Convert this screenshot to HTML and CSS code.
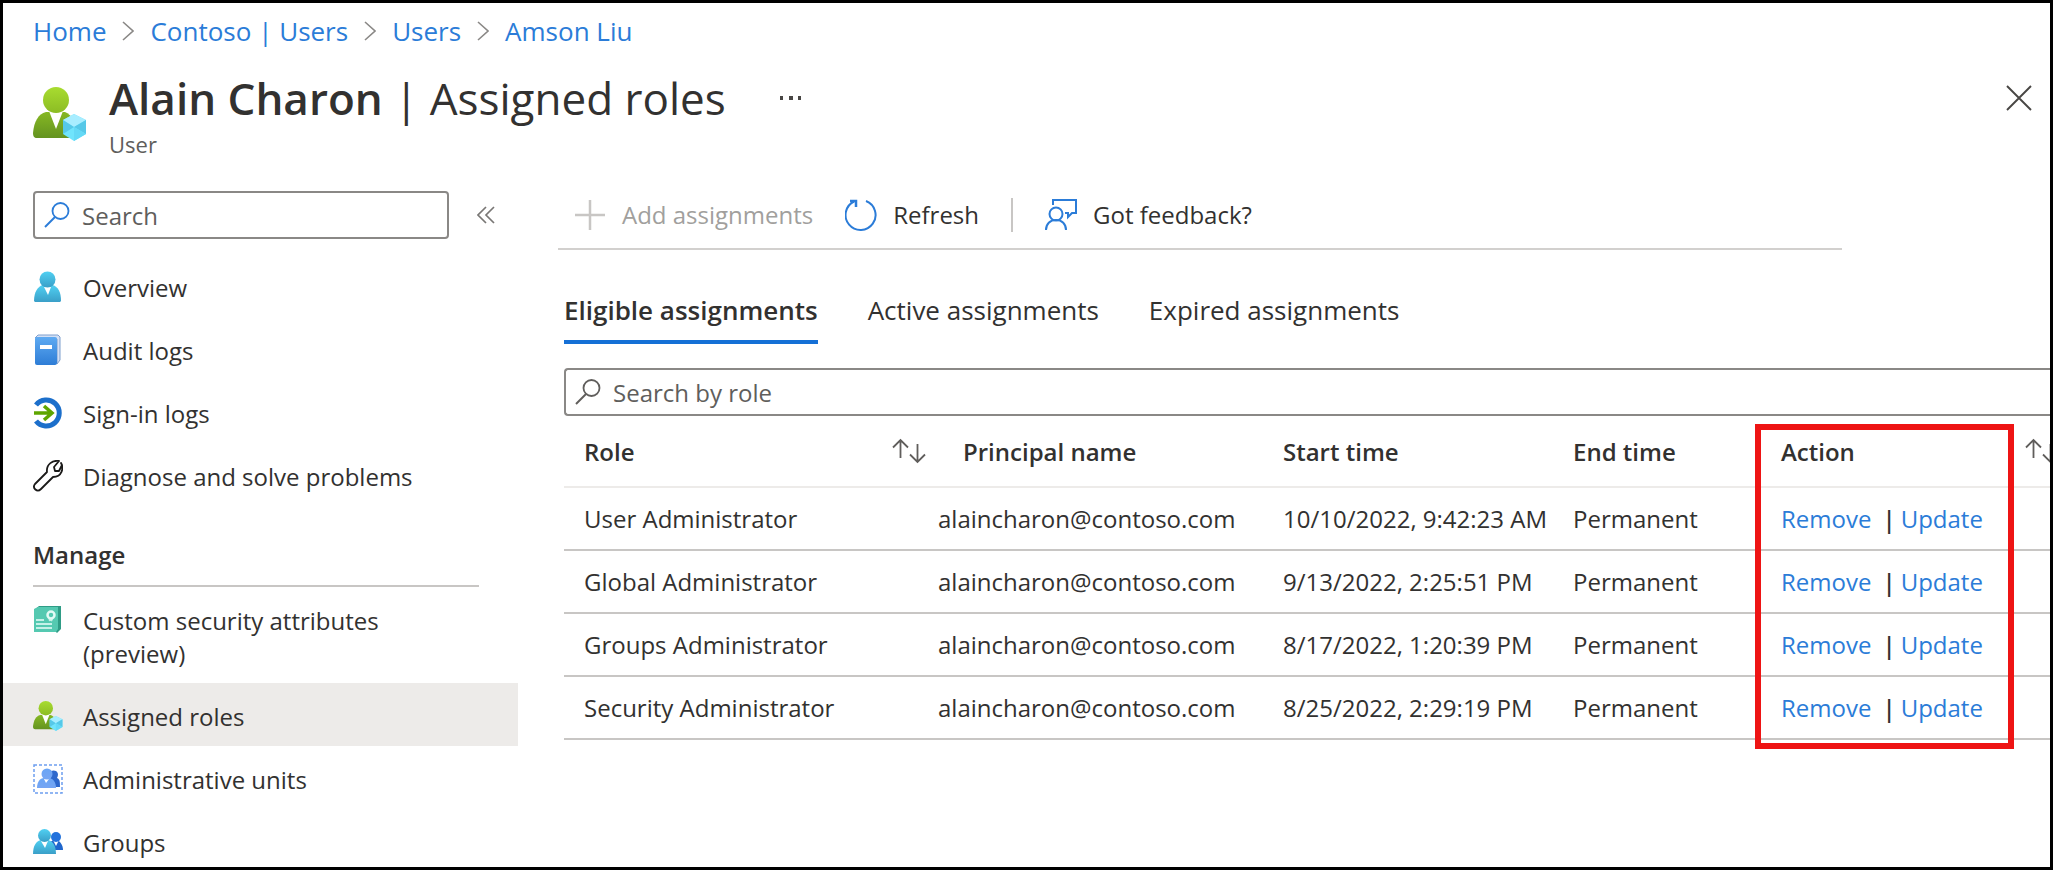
FILE: index.html
```html
<!DOCTYPE html>
<html lang="en">
<head>
<meta charset="utf-8">
<meta name="viewport" content="width=device-width, initial-scale=1">
<title>Alain Charon | Assigned roles</title>
<link rel="stylesheet" href="styles.css">
</head>
<body>
<svg class="defs" width="0" height="0" aria-hidden="true">
  <defs>
    <linearGradient id="green-head" x1="0" y1="0" x2="0" y2="1"><stop offset="0" stop-color="#a8dc30"/><stop offset="1" stop-color="#8cbc24"/></linearGradient>
    <linearGradient id="green-body" x1="0" y1="0" x2="0" y2="1"><stop offset="0" stop-color="#86b823"/><stop offset="1" stop-color="#649320"/></linearGradient>
    <linearGradient id="cyan" x1="0" y1="0" x2="0" y2="1"><stop offset="0" stop-color="#50d0f2"/><stop offset="1" stop-color="#3a9fc8"/></linearGradient>
    <linearGradient id="blue" x1="0" y1="0" x2="0" y2="1"><stop offset="0" stop-color="#5eaaf2"/><stop offset="1" stop-color="#2e7dd6"/></linearGradient>
    <linearGradient id="soft-blue" x1="0" y1="0" x2="0" y2="1"><stop offset="0" stop-color="#6aa5f5"/><stop offset="1" stop-color="#76a5f3"/></linearGradient>
    <symbol id="role-user" viewBox="0 0 54 54">
      <path d="M0 46c1-11 5-19 13-21h19c7 3 12 11 12 21 0 3-1 5-4 5H4c-3 0-4-2-4-5z" fill="url(#green-body)"/>
      <path d="M16 24h14l-7 18z" fill="#fff"/>
      <circle cx="23" cy="13" r="13" fill="url(#green-head)"/>
      <path d="M41 27l12 6v14l-12 7-11-7V33z" fill="#70e4fc"/>
      <path d="M41 27l12 6-12 7-11-7z" fill="#a8edff"/>
      <path d="M53 33v14l-12-7zM30 33l11 7-11 7z" fill="#56c8e8"/>
      <path d="M53 47l-12 7V40z" fill="#65d9f6"/>
    </symbol>
    <symbol id="chevron" viewBox="0 0 12 20"><path d="M1 1l10 9-10 9" fill="none" stroke="#8a8886" stroke-width="1.6"/></symbol>
    <symbol id="search" viewBox="0 0 26 26"><circle cx="16.500" cy="9" r="8" fill="none" stroke="currentColor" stroke-width="1.800"/><path d="M11 15L1 25" fill="none" stroke="currentColor" stroke-width="2"/></symbol>
    <symbol id="sort" viewBox="0 0 34 26"><path d="M8.500 20V2M1 9.500L8.500 2l7.500 7.500M25.500 6v18M18 16.500l7.500 7.500 7.500-7.500" fill="none" stroke="#605e5c" stroke-width="1.800"/></symbol>
  </defs>
</svg>
<div class="frame">
  <nav class="breadcrumb" aria-label="Breadcrumb">
    <a href="#">Home</a><svg><use href="#chevron"/></svg>
    <a href="#">Contoso | Users</a><svg><use href="#chevron"/></svg>
    <a href="#">Users</a><svg><use href="#chevron"/></svg>
    <a href="#">Amson Liu</a>
  </nav>
  <header class="header">
    <svg class="header-icon"><use href="#role-user"/></svg>
    <div class="heading">
      <h1><strong>Alain Charon</strong> | Assigned roles</h1>
      <p>User</p>
    </div>
    <button class="more" type="button" aria-label="More"><svg viewBox="0 0 22 4"><path d="M0 0h3v4H0zM9 0h4v4H9zM18 0h3v4h-3z" fill="#484644"/></svg></button>
    <button class="close" type="button" aria-label="Close"><svg viewBox="0 0 26 26"><path d="M1 1l24 24M25 1L1 25" stroke="#484644" stroke-width="1.900"/></svg></button>
  </header>
  <div class="layout">
    <aside class="sidebar">
      <div class="filter">
        <label class="field side-search"><svg><use href="#search"/></svg><input type="text" placeholder="Search" aria-label="Search"></label>
        <button class="collapse" type="button" aria-label="Collapse"><svg viewBox="0 0 18 18"><path d="M9 1L1 9l8 8M17 1L9 9l8 8" fill="none" stroke="#797775" stroke-width="1.700"/></svg></button>
      </div>
      <nav class="menu" aria-label="User">
        <a href="#"><svg viewBox="0 0 30 32"><path d="M1 30c0-9 4-15 9-16h9c6 1 9 7 9 16l-1 1H2z" fill="url(#cyan)"/><path d="M11 16h7l-3 8z" fill="#fff"/><circle cx="14.500" cy="8.500" r="8" fill="url(#cyan)"/></svg>Overview</a>
        <a href="#"><svg viewBox="0 0 30 32"><path d="M5 1h20l2 2v23l-3 4V5L2 4z" fill="#d4e0f4" stroke="#7f9fce" stroke-width="1"/><rect x="2" y="3" width="22" height="28" rx="2" fill="url(#blue)"/><rect x="7" y="11" width="12" height="4" fill="#fff"/></svg>Audit logs</a>
        <a href="#"><svg viewBox="0 0 30 32"><path d="M3 8a13 13 0 1 1 0 16" fill="none" stroke="#1c6fcb" stroke-width="5"/><path d="M1 16h16M11 9l8 7-8 7" fill="none" stroke="#5ea500" stroke-width="3.500"/></svg>Sign-in logs</a>
        <a href="#"><svg viewBox="0 0 30 32"><path d="M28 3c3 5 1 14-8 14L8 29c-4 4-9-1-6-5L14 12C13 4 20 0 26 1l-5 6 1 4h4l3-6z" fill="#fff" stroke="#1b1a19" stroke-width="1.800" stroke-linejoin="round"/></svg>Diagnose and solve problems</a>
      </nav>
      <h2>Manage</h2>
      <nav class="menu manage" aria-label="Manage">
        <a href="#"><svg viewBox="0 0 30 32"><path d="M1 6l5-4h22v23l-4 4z" fill="#2f9c86"/><path d="M1 5l4-2h20v22l-2 3H1z" fill="#55c9b1"/><path d="M3 16h8M3 20h16M3 24h16" stroke="#c5f1e8" stroke-width="2"/><path d="M20 13l-2 4M16 13l1 4" stroke="#c5f1e8" stroke-width="2"/><circle cx="18" cy="11" r="3.500" fill="none" stroke="#e3faf5" stroke-width="2.500"/></svg><span>Custom security attributes<br>(preview)</span></a>
        <a href="#" class="current" aria-current="page"><svg><use href="#role-user"/></svg>Assigned roles</a>
        <a href="#"><svg viewBox="0 0 30 32"><rect x="1" y="2" width="28" height="28" fill="none" stroke="#6d9ff0" stroke-width="1.500" stroke-dasharray="3 2"/><path d="M14 24c0-5 1-8 4-9V8c5-2 9 2 6 7 3 1 3 4 3 9z" fill="#2e68cc"/><path d="M4 25c0-6 3-10 7-10h4c5 0 8 4 8 10z" fill="url(#soft-blue)"/><path d="M11 16h5l-3 4z" fill="#fff"/><circle cx="14" cy="11" r="5.500" fill="url(#soft-blue)"/></svg>Administrative units</a>
        <a href="#"><svg viewBox="0 0 30 32"><path d="M15 24c0-6 3-10 7-10 5 0 8 5 8 10z" fill="#1f66cc"/><path d="M20 14h6l-3 6z" fill="#fff"/><circle cx="23" cy="11" r="5" fill="#2272dc"/><path d="M0 28c0-8 3-13 8-14h7c5 1 8 6 8 14z" fill="url(#cyan)"/><path d="M8 15h7l-3 7z" fill="#fff"/><circle cx="11.500" cy="9.500" r="6.500" fill="url(#cyan)"/></svg>Groups</a>
      </nav>
    </aside>
    <main class="main">
      <div class="toolbar">
        <button type="button" disabled><svg viewBox="0 0 32 32"><path d="M16 1v30M1 16h30" stroke="#c8c6c4" stroke-width="2.500"/></svg>Add assignments</button>
        <button type="button"><svg viewBox="0 0 32 32"><path d="M21 2A15 15 0 1 1 9 2.500" fill="none" stroke="#2b7cd8" stroke-width="2"/><path d="M5 2h6v6" fill="none" stroke="#2b7cd8" stroke-width="2.500"/></svg>Refresh</button>
        <span class="divider"></span>
        <button type="button"><svg viewBox="0 0 32 32"><g fill="none" stroke="#2b7cd8" stroke-width="2"><circle cx="11" cy="15" r="6.500"/><path d="M1 31c0-6 4-10 10-10s10 4 10 10M8 6V1h23v13h-4l-4 4v-4h-3"/></g></svg>Got feedback?</button>
      </div>
      <div class="tabs" role="tablist">
        <button type="button" role="tab" aria-selected="true">Eligible assignments</button>
        <button type="button" role="tab" aria-selected="false">Active assignments</button>
        <button type="button" role="tab" aria-selected="false">Expired assignments</button>
      </div>
      <label class="field role-search"><svg><use href="#search"/></svg><input type="text" placeholder="Search by role" aria-label="Search by role"></label>
      <div class="results">
        <table>
          <colgroup><col class="c-role"><col class="c-name"><col class="c-start"><col class="c-end"><col class="c-action"><col></colgroup>
          <thead>
            <tr><th scope="col"><span class="sortable">Role<svg><use href="#sort"/></svg></span></th><th scope="col" class="name-head">Principal name</th><th scope="col">Start time</th><th scope="col">End time</th><th scope="col">Action</th><th scope="col" class="tail" aria-label="Sort"><svg><use href="#sort"/></svg></th></tr>
          </thead>
          <tbody>
            <tr><td>User Administrator</td><td>alaincharon@contoso.com</td><td>10/10/2022, 9:42:23 AM</td><td>Permanent</td><td><span class="actions"><a href="#">Remove</a><b>|</b><a href="#">Update</a></span></td><td></td></tr>
            <tr><td>Global Administrator</td><td>alaincharon@contoso.com</td><td>9/13/2022, 2:25:51 PM</td><td>Permanent</td><td><span class="actions"><a href="#">Remove</a><b>|</b><a href="#">Update</a></span></td><td></td></tr>
            <tr><td>Groups Administrator</td><td>alaincharon@contoso.com</td><td>8/17/2022, 1:20:39 PM</td><td>Permanent</td><td><span class="actions"><a href="#">Remove</a><b>|</b><a href="#">Update</a></span></td><td></td></tr>
            <tr><td>Security Administrator</td><td>alaincharon@contoso.com</td><td>8/25/2022, 2:29:19 PM</td><td>Permanent</td><td><span class="actions"><a href="#">Remove</a><b>|</b><a href="#">Update</a></span></td><td></td></tr>
          </tbody>
        </table>
        <div class="highlight"></div>
      </div>
    </main>
  </div>
</div>
</body>
</html>
```
FILE: styles.css
```css
* { box-sizing: border-box; }

body {
  margin: 0;
  background: #fff;
  color: #323130;
  font-family: "Open Sans", "Noto Sans", sans-serif;
  font-size: 24px;
  line-height: 33px;
}

a { color: #2b7cd8; text-decoration: none; }
button { padding: 0; border: 0; background: none; color: inherit; font: inherit; }
svg { display: block; flex: none; }
.defs { position: absolute; }

.frame {
  display: flex;
  flex-direction: column;
  height: 100vh;
  border: 3px solid #000;
  overflow: hidden;
}

.breadcrumb {
  display: flex;
  align-items: center;
  gap: 16px;
  height: 56px;
  padding-left: 30px;
  font-size: 26px;
}
.breadcrumb svg { width: 12px; height: 20px; }

.header {
  display: flex;
  height: 132px;
  padding: 8px 18px 0 30px;
}
.header-icon { width: 54px; height: 54px; margin: 20px 22px 0 0; }
.heading h1 { margin: 0; font-size: 44px; font-weight: 400; line-height: 62px; }
.heading strong { font-weight: 600; }
.heading p { margin: 0; color: #605e5c; font-size: 22px; line-height: 30px; }
.more { height: 62px; margin-left: 54px; }
.more svg { width: 22px; height: 4px; }
.close { height: 62px; margin-left: auto; }
.close svg { width: 26px; height: 26px; }

.layout { display: flex; flex: 1; min-height: 0; }
.sidebar { flex: none; width: 515px; }
.filter { display: flex; align-items: center; gap: 28px; margin-bottom: 17px; padding-left: 30px; }
.side-search { width: 416px; }
.collapse svg { width: 18px; height: 18px; }

.field {
  display: flex;
  align-items: center;
  gap: 12px;
  height: 48px;
  padding-left: 9px;
  border: 2px solid #8a8886;
  border-radius: 4px;
}
.field svg { width: 26px; height: 26px; color: #2b7cd8; }
.field input {
  flex: 1;
  min-width: 0;
  padding: 0;
  border: 0;
  outline: 0;
  background: none;
  color: #323130;
  font: inherit;
}
.field input::placeholder { color: #605e5c; opacity: 1; }

.menu a { display: flex; gap: 20px; padding: 15px 0 15px 30px; color: #323130; }
.menu.manage a { padding: 17px 0 13px 30px; }
.menu svg { width: 30px; height: 32px; }
.menu .current { background: #edebe9; }
.sidebar h2 {
  margin: 0 39px 0 30px;
  padding: 30px 0 14px;
  border-bottom: 2px solid #c8c6c4;
  font-size: 24px;
  font-weight: 600;
}

.main { flex: 1; min-width: 0; padding-left: 40px; overflow: hidden; }
.toolbar {
  display: flex;
  align-items: center;
  height: 59px;
  margin-right: 208px;
  padding: 0 0 10px 16px;
  border-bottom: 2px solid #d2d0ce;
}
.toolbar button { display: flex; align-items: center; gap: 16px; margin-right: 32px; }
.toolbar button:disabled { color: #a19f9d; }
.toolbar svg { width: 32px; height: 32px; }
.divider { width: 2px; height: 34px; margin-right: 32px; background: #c8c6c4; }

.tabs { display: flex; gap: 50px; padding: 37px 0 24px 6px; font-size: 26px; }
.tabs button { padding: 7px 0 13px; border-bottom: 4px solid transparent; }
.tabs [aria-selected="true"] { border-color: #1570d6; font-weight: 600; }

.role-search { margin-left: 6px; border-right: 0; border-radius: 4px 0 0 4px; }
.role-search svg { color: #605e5c; }

.results { position: relative; margin-left: 6px; }
table { width: 100%; table-layout: fixed; border-collapse: collapse; }
.c-role { width: 374px; }
.c-name { width: 345px; }
.c-start { width: 290px; }
.c-end { width: 208px; }
.c-action { width: 244px; }
th, td { padding: 0; border-bottom: 2px solid #c8c6c4; text-align: left; white-space: nowrap; }
th { height: 71px; border-bottom-color: #edebe9; font-weight: 600; }
td { height: 63px; }
th:first-child, td:first-child { padding-left: 20px; }
.sortable { display: flex; align-items: center; justify-content: space-between; padding-right: 12px; }
.sortable svg, .tail svg { width: 34px; height: 26px; }
.name-head { padding-left: 25px; }
.actions { display: flex; }
.actions b { margin: 0 5px 0 11px; font-weight: 600; }

.highlight {
  position: absolute;
  top: 8px;
  bottom: -9px;
  left: 1191px;
  width: 259px;
  border: 6px solid #ee1414;
  pointer-events: none;
}
```
